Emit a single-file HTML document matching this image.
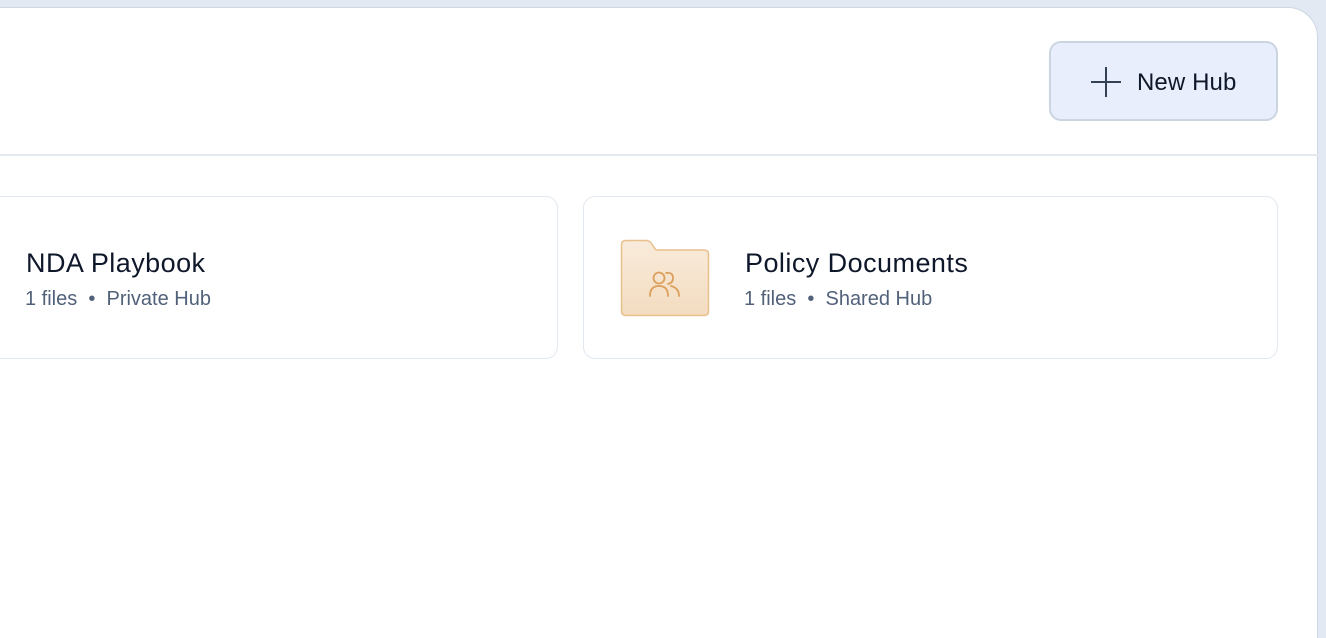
<!DOCTYPE html>
<html><head><style>
html,body{margin:0;padding:0;width:1326px;height:638px;overflow:hidden;}
body{background:#e3e9f2;position:relative;font-family:"Liberation Sans",sans-serif;}
.panel{position:absolute;left:-40px;top:7px;width:1358px;height:631px;background:#fff;border:1px solid #cdd6e3;border-bottom:none;border-radius:30px 30px 0 0;box-sizing:border-box;}
.btn{position:absolute;left:1049px;top:41px;width:229px;height:80px;box-sizing:border-box;background:#e8eefb;border:2px solid #cbd5e1;border-radius:12px;}
.btn span{position:absolute;left:86px;top:26px;font-size:24px;color:#0f172a;letter-spacing:0.1px;}
.divider{position:absolute;left:0;top:154px;width:1318px;height:2px;background:#e4e9f1;}
.card{position:absolute;top:196px;height:163px;box-sizing:border-box;border:1.5px solid #e2e8f0;border-radius:12px;background:#fff;}
.t{position:absolute;font-size:27px;color:#0f172a;letter-spacing:0.45px;}
.s{position:absolute;font-size:20px;color:#52617a;}
</style></head><body>
<div class="panel"></div>
<div class="btn">
<svg style="position:absolute;left:39px;top:23px" width="32" height="32" viewBox="0 0 32 32"><path d="M16 1V31M1 16H31" stroke="#334155" stroke-width="2"/></svg>
<span>New Hub</span></div>
<div class="divider"></div>
<div class="card" style="left:-20px;width:578px;"></div>
<div class="t" style="left:26px;top:248px;">NDA Playbook</div>
<div class="s" style="left:25px;top:288px;">1 files&nbsp; •&nbsp; Private Hub</div>
<div class="card" style="left:583px;width:695px;"></div>
<svg style="position:absolute;left:620px;top:239px" width="90" height="78" viewBox="0 0 90 78">
<defs><linearGradient id="g" x1="0" y1="0" x2="0" y2="1"><stop offset="0" stop-color="#f9ebdb"/><stop offset="1" stop-color="#f3dcc0"/></linearGradient></defs>
<path d="M1.5 6Q1.5 1.5 6 1.5H26Q29 1.5 31 4L36 11H84Q88.5 11 88.5 15.5V72Q88.5 76.5 84 76.5H6Q1.5 76.5 1.5 72Z" fill="url(#g)" stroke="#e8c08c" stroke-width="1.5"/>
<g fill="none" stroke="#dc9f5c" stroke-width="1.8" stroke-linecap="round">
<circle cx="39" cy="39" r="5.5"/><path d="M30 57Q30 47 39 47Q48 47 48 57"/>
<path d="M46 34Q53 33 53 39Q53 44 48 45"/><path d="M51 47Q59 49 59 57"/>
</g></svg>
<div class="t" style="left:745px;top:248px;">Policy Documents</div>
<div class="s" style="left:744px;top:288px;">1 files&nbsp; •&nbsp; Shared Hub</div>
</body></html>
